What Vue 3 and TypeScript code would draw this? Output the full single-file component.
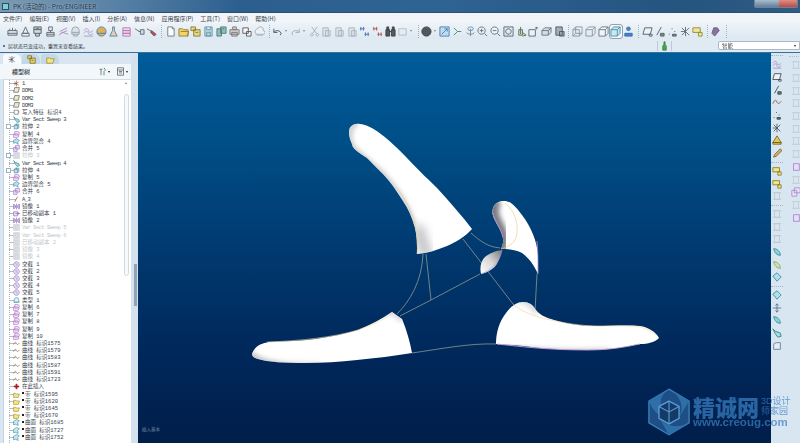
<script setup lang="ts">
/**
 * Pro/ENGINEER main window - model tree, toolbars and the shaded part
 */

interface Glyph {
  d: string
  stroke: string
  fill?: string
}

const glyphs: Record<string, Glyph> = {
  ruler: { d: 'M1 5h10v5H1zM3 5V3M6 5V2M9 5V3M1 8h10', stroke: '#49525c', fill: '#dfe6ec' },
  cone: { d: 'M6 1 9 8H3zM2 8h8v3H2z', stroke: '#49525c', fill: '#eef2f5' },
  sheet: { d: 'M2 1h8v7H2zM2 4h8M4 8v3h4V8M4 2.500h4', stroke: '#39424c', fill: '#cfd9e2' },
  person: { d: 'M4 1h4v4H4zM6 5v2M2 7h8v2H2zM2 9v2h8V9', stroke: '#49525c', fill: '#e4eaef' },
  wave: { d: 'M1 10 5 7 11 9M2 6l8-4M3 8l7-3', stroke: '#a27ab8', fill: 'none' },
  dome: { d: 'M2 9V5a4 4 0 0 1 8 0v4zM2 7h8M4 9v2h4V9', stroke: '#8a97a3', fill: '#d8e1e8' },
  ripple: { d: 'M1 5c2-3 4-3 5 0s3 2 5 0M1 8c2-3 4-3 5 0s3 2 5 0M1 11h10', stroke: '#a98dc2', fill: 'none' },
  globe: { d: 'M6 1a5 5 0 1 1-.1 0M1 8h10', stroke: '#2c6fb0', fill: '#e0a43a' },
  flask: { d: 'M5 1h2v4l3 6H2l3-6z', stroke: '#3f6d9b', fill: '#e7c9a8' },
  stack: { d: 'M2 2h8v3H2zM2 5h8v3H2zM2 8h8v3H2z', stroke: '#b060a8', fill: '#efd7ee' },
  tag: { d: 'M1 3l5 3M5 6h2M7 4h4v5H7z', stroke: '#556', fill: '#c7d6e0' },
  tagred: { d: 'M1 3l5 3M6 5l5 4-2 2-4-4z', stroke: '#6b3b3b', fill: '#a33' },
  page: { d: 'M3 1h5l2 2v8H3zM8 1v2h2', stroke: '#5c6670', fill: '#fff' },
  open: { d: 'M1 3h4l1 1h5v7H1zM3 6h9l-2 5', stroke: '#8f6f10', fill: '#f1cf55' },
  folders: { d: 'M1 1h5v4H1zM4 4h7v7H4zM6 7h3', stroke: '#7a6a1e', fill: '#e9d06a' },
  disk: { d: 'M2 1h8v10H2zM4 1v3h4V1M4 7h4v4H4z', stroke: '#5e8899', fill: '#a7d2df' },
  multi: { d: 'M1 3h5v8H1zM5 1h6v7H5zM7 3h2', stroke: '#3a6a6a', fill: '#7fb7ae' },
  printer: { d: 'M4 1h4v3H4zM1 4h10v5H1zM3 7h6v4H3z', stroke: '#666', fill: '#cfc9bd' },
  copy: { d: 'M2 2h6v6H2zM6 6h5v5H6z', stroke: '#444', fill: '#f5f5f5' },
  cloud: { d: 'M2 8a3 3 0 0 1 2-5 3 3 0 0 1 6 2 2 2 0 0 1 0 4H2zM3 10h7', stroke: '#9aa4ad', fill: '#eef2f5' },
  undo: { d: 'M2 3v4h4M2 7a4.500 4.500 0 0 1 8 1l-1 2', stroke: '#2f3a45', fill: 'none' },
  redo: { d: 'M10 3v4H6M10 7a4.500 4.500 0 0 0-8 1l1 2', stroke: '#94a0ab', fill: 'none' },
  cut: { d: 'M3 1l5 7M9 1 4 8M3 8a1.500 1.500 0 1 0 .1 0M9 8a1.500 1.500 0 1 0 .1 0', stroke: '#98a3ad', fill: 'none' },
  paste: { d: 'M2 2h6v9H2zM5 5h5v6H5z', stroke: '#a0aab3', fill: '#dbe2e8' },
  regen: { d: 'M2 1v4M5 1v4M1 3h5M7 7v4M10 7v4M6 9h5', stroke: '#2a5ea8', fill: 'none' },
  regen2: { d: 'M2 1v4M5 1v4M1 3h5M7 7v4M10 7v4M6 9h5', stroke: '#a83a3a', fill: 'none' },
  bino: { d: 'M1 4h4v7H1zM7 4h4v7H7zM5 6h2M2 1h2v3H2zM8 1h2v3H8z', stroke: '#222', fill: '#39414a' },
  dashed: { d: 'M2 3h8v7H2z', stroke: '#aab5bf', fill: 'none' },
  sphere: { d: 'M6 1a5 5 0 1 1-.1 0z', stroke: '#222', fill: '#3a3d42' },
  refit: { d: 'M1 1h10v10H1zM3 9l6-6M6 3h3v3', stroke: '#2f6ea8', fill: '#bcd8ee' },
  nodes: { d: 'M2 2l4 4-4 4M6 6h4', stroke: '#1f7a6a', fill: 'none' },
  spin: { d: 'M3 3a3 2 0 1 1 6 0 3 2 0 1 1-6 0M2 7a4 2 0 1 0 8 0M6 3v8', stroke: '#5b7f99', fill: 'none' },
  zoomin: { d: 'M5 1a4 4 0 1 1-.1 0M8 8l3 3M3 5h4M5 3v4', stroke: '#4b5a68', fill: '#eef3f7' },
  zoomout: { d: 'M5 1a4 4 0 1 1-.1 0M8 8l3 3M3 5h4', stroke: '#4b5a68', fill: '#eef3f7' },
  fit: { d: 'M1 1h10v10H1zM6 3a3 3 0 1 1-.1 0', stroke: '#3f5266', fill: '#dfe8ef' },
  orient: { d: 'M5 1v8M3 4h4v6H3zM7 7l4 3-4 1', stroke: '#3d5a45', fill: '#d7e5b9' },
  views: { d: 'M1 4h7v7H1zM8 2h3M9 1v3', stroke: '#47525c', fill: '#eef2f5' },
  layers: { d: 'M1 5l3-3h7L8 5zM1 5v5h7V5M8 5l3-3v5l-3 3', stroke: '#54616d', fill: '#cfdbe4' },
  display: { d: 'M2 1h7v9H2zM6 6h5v5H6z', stroke: '#3b3f44', fill: '#99a2aa' },
  box1: { d: 'M1 4h7v7H1zM1 4l3-3h7v7l-3 3M4 1v7h7M4 8l-3 3', stroke: '#7a8894', fill: 'none' },
  box2: { d: 'M1 4h7v7H1zM1 4l3-3h7v7l-3 3M8 4l3-3', stroke: '#7a8894', fill: 'none' },
  box3: { d: 'M1 4h7v7H1zM1 4l3-3h7v7l-3 3M8 4l3-3', stroke: '#59646e', fill: '#f4f7f9' },
  boxsel: { d: 'M1 4h7v7H1zM1 4l3-3h7v7l-3 3M8 4l3-3', stroke: '#2f7f96', fill: '#bfe6f0' },
  save: { d: 'M6 1a2 2 0 1 1-.1 0M2 8h8v3H2z', stroke: '#1a4fa0', fill: '#2a74d0' },
  plane: { d: 'M3 2h8L9 9H1zM8 9h3v2H8z', stroke: '#3b4650', fill: '#eef2f5' },
  axis: { d: 'M8 1 3 10M7 8h4v3H7z', stroke: '#3b4650', fill: '#5c8a5c' },
  points: { d: 'M2 9h1M5 3h1M8 6h1M6 9h4v2H6z', stroke: '#33424f', fill: '#5c8a5c' },
  csys: { d: 'M2 2l8 8M10 2l-8 8M6 1v10M1 6h5', stroke: '#4a5560', fill: 'none' },
  note: { d: 'M1 2h8v5H1zM7 7h4v4H7z', stroke: '#8a7a1a', fill: '#f0e58a' },
  hat: { d: 'M3 2h4l2 3-5 6-3-3z', stroke: '#5c4a66', fill: '#7a5a9a' },
  pencil: { d: 'M10 1 3 8l-1 3 3-1 7-7z', stroke: '#7a5a1f', fill: '#d9b36a' },
  warn: { d: 'M6 1 11 9H1zM1 9h10v2H1z', stroke: '#786010', fill: '#dcc95a' },
  bottle: { d: 'M5 1h2v3l2 2v5H3V6l2-2z', stroke: '#2d7a37', fill: '#45a950' },
  soft: { d: 'M3 2h6v8H3zM1 2h10M1 10h10', stroke: '#bcc6cf', fill: '#dde5ec' },
  purple: { d: 'M3 2h7v8H3z', stroke: '#9a5cc8', fill: '#e9dcf5' },
  blade: { d: 'M2 2c4 0 8 3 8 8-4 0-7-3-8-8z', stroke: '#2f8a9a', fill: '#8fd0da' },
  blade2: { d: 'M2 2c4 0 8 3 8 8-4 0-7-3-8-8z', stroke: '#8aa45f', fill: '#d0dfa9' },
  tube: { d: 'M1 5l5-4 5 5-5 5z', stroke: '#2f8a9a', fill: '#b6dee8' },
  move: { d: 'M6 1v10M1 6h10M4 3l2-2 2 2M4 9l2 2 2-2', stroke: '#4e7088', fill: 'none' },
  round: { d: 'M2 10V5a3 3 0 0 1 3-3h5v8z', stroke: '#5f7a8a', fill: '#e3edf3' },
  star: { d: 'M2 3l8 6M10 3 2 9M6 1v10M1 6h4', stroke: '#8c4a20', fill: 'none' },
  datum: { d: 'M3 1h8L9 9H1z', stroke: '#3b4650', fill: '#f3e9c6' },
  square: { d: 'M2 2h7v7H2zM9 5h2', stroke: '#4a5560', fill: '#fff' },
  sweep: { d: 'M1 1l3 3 6 2 1 4-4 1-3-4z', stroke: '#2f7f8a', fill: '#a9dbe0' },
  block: { d: 'M2 4h6v6H2zM2 4l2-2h6v6l-2 2M6 1v3', stroke: '#3f7f96', fill: '#bfe0ea' },
  dup: { d: 'M3 1h5a3 3 0 0 1 0 6H3zM1 5h6a3 3 0 0 1 0 6H1z', stroke: '#a964c4', fill: '#f3e6f7' },
  blend: { d: 'M1 4l5-3 5 3-3 3 1 4-4-3-4 1z', stroke: '#2f8aa0', fill: '#b9e2ec' },
  merge: { d: 'M1 4h6v7H1zM4 1h7v6H4z', stroke: '#9a68c4', fill: '#eee2f7' },
  gray: { d: 'M1 1h10v10H1zM4 3h4v6H4z', stroke: '#c7cdd2', fill: '#dfe2e5' },
  line: { d: 'M8 1 3 10', stroke: '#5a3a20', fill: 'none' },
  mirror: { d: 'M6 1v10M1 2l3 2v4l-3 2zM11 2 8 4v4l3 2z', stroke: '#7a58ae', fill: '#d7c8ee' },
  moved: { d: 'M1 3h7v7H1zM4 6h7M9 4l2 2-2 2', stroke: '#8a4ab8', fill: '#f1e6f8' },
  intersect: { d: 'M6 1a5 5 0 1 1-.1 0M4 4c2 0 3 2 3 4', stroke: '#9a80c6', fill: '#e2d8f2' },
  shape: { d: 'M2 9V5a4 4 0 0 1 8 0v4zM1 9h10', stroke: '#3d8fa0', fill: '#dff0f5' },
  curve: { d: 'M1 8c2-5 4-5 5-2s3 2 5-1', stroke: '#8a5a32', fill: 'none' },
  plus: { d: 'M5 2h2v3h3v2H7v3H5V7H2V5h3z', stroke: '#a01020', fill: '#c8102e' },
  quilt: { d: 'M1 4h4l1 1h5l-2 6H1z', stroke: '#a08a20', fill: '#f2e58a' },
  surface: { d: 'M1 4l5-3 5 2-3 3 1 5-5-2-3 1z', stroke: '#2f8aa0', fill: '#c9e9ef' },
}

const toolGroups: { name: string; drop?: boolean; on?: boolean }[][] = [
  ['ruler', 'cone', 'sheet', 'person', 'wave', 'dome', 'ripple', 'globe', 'flask', 'stack', 'tag', 'tagred'].map((name) => ({ name })),
  ['page', 'open', 'folders', 'disk', 'multi', 'printer', 'copy', 'cloud'].map((name) => ({ name })),
  [
    { name: 'undo', drop: true },
    { name: 'redo', drop: true },
    { name: 'cut' },
    { name: 'paste' },
    { name: 'paste' },
    { name: 'paste' },
    { name: 'regen' },
    { name: 'regen2' },
    { name: 'bino' },
    { name: 'dashed', drop: true },
  ],
  [
    { name: 'sphere', drop: true },
    { name: 'refit' },
    { name: 'nodes' },
    { name: 'spin' },
    { name: 'zoomin' },
    { name: 'zoomout' },
    { name: 'fit' },
    { name: 'orient' },
    { name: 'views' },
    { name: 'layers' },
    { name: 'display' },
  ],
  [{ name: 'box1' }, { name: 'box2' }, { name: 'box3' }, { name: 'boxsel', on: true }, { name: 'save' }],
  ['plane', 'axis', 'points', 'csys', 'note'].map((name) => ({ name })),
  [{ name: 'hat' }],
]

const menus = ['文件(F)', '编辑(E)', '视图(V)', '插入(I)', '分析(A)', '信息(N)', '应用程序(P)', '工具(T)', '窗口(W)', '帮助(H)']

interface Row {
  icon: string
  text: string
  off?: boolean
  plus?: boolean
  mark?: boolean
}

const seq = (icon: string, label: string, ids: (number | string)[]): Row[] =>
  ids.map((id) => ({ icon, text: `${label}${id}` }))

const rows: Row[] = [
  { icon: 'star', text: '1' },
  { icon: 'datum', text: 'DOM1' },
  { icon: 'datum', text: 'DOM2' },
  { icon: 'datum', text: 'DOM3' },
  { icon: 'square', text: '写入特征 标识4' },
  { icon: 'sweep', text: 'Var Sect Sweep 3' },
  { icon: 'block', text: '拉伸 2', plus: true },
  { icon: 'dup', text: '复制 4' },
  { icon: 'blend', text: '边界混合 4' },
  { icon: 'merge', text: '合并 5' },
  { icon: 'gray', text: '拉伸 3', off: true, plus: true },
  { icon: 'sweep', text: 'Var Sect Sweep 4' },
  { icon: 'block', text: '拉伸 4', plus: true },
  { icon: 'dup', text: '复制 5' },
  { icon: 'blend', text: '边界混合 5' },
  { icon: 'merge', text: '合并 6' },
  { icon: 'line', text: 'A_3' },
  { icon: 'mirror', text: '镜像 1' },
  { icon: 'moved', text: '已移动副本 1' },
  { icon: 'mirror', text: '镜像 2' },
  { icon: 'gray', text: 'Var Sect Sweep 5', off: true },
  { icon: 'gray', text: 'Var Sect Sweep 6', off: true },
  { icon: 'gray', text: '已移动副本 2', off: true },
  { icon: 'gray', text: '镜像 3', off: true },
  { icon: 'gray', text: '镜像 4', off: true },
  ...seq('intersect', '交截 ', [1, 2, 3, 4, 5]),
  { icon: 'shape', text: '类型 1' },
  ...seq('dup', '复制 ', [6, 7, 8, 9, 10]),
  ...seq('curve', '曲线 标识', [1575, 1579, 1583, 1587, 1591, 1723]),
  { icon: 'plus', text: '在此插入' },
  ...[1595, 1620, 1645, 1670].map((id) => ({ icon: 'quilt', text: `带 标识${id}`, mark: true })),
  ...[1685, 1727, 1752].map((id) => ({ icon: 'surface', text: `曲面 标识${id}`, mark: true })),
]

const isLatin = (text: string) => /^[A-Za-z]/.test(text)

const rightCol1 = [
  ['ripple', 'plane', 'axis', 'curve', 'points', 'csys', 'warn', 'pencil'],
  ['note', 'note', 'soft'],
  ['soft', 'soft', 'soft', 'blade', 'blade2', 'tube'],
  ['tube', 'move', 'blade', 'sweep', 'round'],
]
const rightCol2 = ['soft', 'soft', 'soft', 'soft', 'soft', 'soft', 'soft', 'soft', 'purple', 'soft', 'merge', 'soft', 'purple']

// Outlines in page pixels, used both as fill and as clip for the soft shading
const hornBig =
  'M349 131C349 125 354 122 360 123 372 124 388 137 407 157 420 171 430 180 437 187 450 201 462 215 472 228 465 236 456 241 447 245 437 249 428 252 417 253 417 243 417 235 415 227 412 216 408 207 403 200 396 189 390 180 383 173 377 167 372 162 367 157 360 152 352 148 352 143 350 139 349 135 349 131Z'
const hornSmall =
  'M503 200C510 199 516 206 522 214 531 226 537 240 538 254L538 273C534 264 529 257 522 252 516 249 509 248 501 248 505 240 503 233 498 225 494 218 491 213 493 207 495 202 499 200 503 200Z'
const footLeft =
  'M252 353C254 346 261 342 269 341 285 340 300 340 315 338 330 336 345 333 358 329 370 324 382 318 392 311L402 318C407 330 410 341 412 352 395 355 375 357 357 359 340 361 322 362 305 362 285 362 268 361 258 358 254 357 252 355 252 353Z'
const footRight =
  'M496 343C496 332 499 321 506 312 511 305 517 301 523 301 529 301 533 304 535 308 539 313 544 316 551 318 563 322 578 325 595 325 610 325 627 324 640 325 648 326 656 331 659 337 655 341 648 343 640 343 625 346 608 349 587 349 570 349 555 348 540 347 525 345 510 344 496 343Z'
</script>

<template>
  <div class="app">
    <!-- Window title -->
    <header class="title">
      <span class="title__icon"></span>
      <span class="title__text">PK (活动的) - Pro/ENGINEER</span>
      <div class="winbtns">
        <span class="winbtn"></span>
        <span class="winbtn"></span>
        <span class="winbtn winbtn--close"></span>
      </div>
    </header>

    <nav class="menu">
      <span v-for="m in menus" :key="m">{{ m }}</span>
    </nav>

    <div class="tools">
      <div v-for="(group, gi) in toolGroups" :key="gi" class="tools__group">
        <span v-for="(t, ti) in group" :key="ti" class="tool" :class="{ 'tool--on': t.on, 'tool--drop': t.drop }">
          <svg width="11" height="11" viewBox="0 0 12 12">
            <path :d="glyphs[t.name].d" :stroke="glyphs[t.name].stroke" :fill="glyphs[t.name].fill ?? 'none'" />
          </svg>
          <i v-if="t.drop" class="caret"></i>
        </span>
      </div>
    </div>

    <div class="msg">
      <span class="msg__dot"></span>
      <span class="msg__text">层状态已变成功，重置来查看结果。</span>
      <span class="msg__status">
        <svg width="7" height="10" viewBox="0 0 12 12" preserveAspectRatio="none">
          <path :d="glyphs.bottle.d" :stroke="glyphs.bottle.stroke" :fill="glyphs.bottle.fill" />
        </svg>
      </span>
      <span class="msg__select">智能<i class="caret caret--dark"></i></span>
    </div>

    <main class="main">
      <!-- Model tree -->
      <aside class="side">
        <div class="side__inner">
          <div class="tabs">
            <span class="tab tab--on"><svg width="8" height="9" viewBox="0 0 12 12"><path :d="glyphs.csys.d" stroke="#445" fill="none" /></svg></span>
            <span class="tab"><svg width="9" height="9" viewBox="0 0 12 12"><path :d="glyphs.folders.d" :stroke="glyphs.folders.stroke" :fill="glyphs.folders.fill" /></svg></span>
            <span class="tab"><svg width="9" height="9" viewBox="0 0 12 12"><path :d="glyphs.quilt.d" :stroke="glyphs.quilt.stroke" :fill="glyphs.quilt.fill" /></svg></span>
          </div>
          <div class="side__head">
            <span>模型树</span>
            <span class="side__acts">
              <svg width="9" height="9" viewBox="0 0 12 12"><path d="M2 3h4M4 3v8M8 1l2 3-2 2M8 6v5" stroke="#3f6a55" fill="none" /></svg>
              <i class="caret caret--dark"></i>
              <svg class="side__list" width="9" height="9" viewBox="0 0 12 12"><path d="M2 1h8v10H2zM2 4h8M4 6h4M4 8h4" stroke="#555f69" fill="#eef2f5" /></svg>
              <i class="caret caret--dark"></i>
            </span>
          </div>
          <div class="tree">
            <div class="tree__rows">
              <div v-for="(r, i) in rows" :key="i" class="row" :class="{ 'row--off': r.off }">
                <span class="row__plus" :class="{ 'row__plus--on': r.plus }"></span>
                <svg class="row__icon" width="7" height="7" viewBox="0 0 12 12">
                  <path :d="glyphs[r.icon].d" :stroke="glyphs[r.icon].stroke" :fill="glyphs[r.icon].fill ?? 'none'" />
                </svg>
                <span class="row__text" :class="{ 'row__text--latin': isLatin(r.text) }"><b v-if="r.mark" class="row__mark"></b>{{ r.text }}</span>
              </div>
            </div>
            <div class="tree__scroll">
              <span class="tree__arrow"></span>
              <span class="tree__thumb"></span>
            </div>
          </div>
        </div>
        <div class="splitter"><span class="splitter__bar"></span></div>
      </aside>

      <!-- Graphics window -->
      <section class="canvas">
        <svg class="part" viewBox="138 52 633 391" width="633" height="391">
          <defs>
            <filter id="soft" x="-30%" y="-30%" width="160%" height="160%">
              <feGaussianBlur stdDeviation="2.4" />
            </filter>
            <filter id="wide" x="-50%" y="-50%" width="200%" height="200%">
              <feGaussianBlur stdDeviation="5" />
            </filter>
            <clipPath id="clipBig"><path :d="hornBig" /></clipPath>
            <clipPath id="clipSmall"><path :d="hornSmall" /></clipPath>
            <clipPath id="clipFootL"><path :d="footLeft" /></clipPath>
            <clipPath id="clipFootR"><path :d="footRight" /></clipPath>
            <linearGradient id="lens" x1="0" y1="1" x2="1" y2="0">
              <stop offset="0" stop-color="#fff" />
              <stop offset="0.5" stop-color="#d8d8d8" />
              <stop offset="1" stop-color="#77777c" />
            </linearGradient>
          </defs>

          <!-- Connecting curves -->
          <g fill="none" stroke="#8d9a8e" stroke-width="0.8">
            <path d="M471 232C480 240 488 246 500 247" />
            <path d="M463 238 513 303" />
            <path d="M423 253C422 280 410 300 397 313" />
            <path d="M426 253 431 299" />
            <path d="M480 273 431 299 400 315" />
            <path d="M537 273 535 310" />
            <path d="M412 352C440 348 470 342 496 343" />
          </g>

          <!-- Upper horn -->
          <path fill="#fff" :d="hornBig" />
          <g clip-path="url(#clipBig)">
            <path filter="url(#soft)" fill="none" stroke="#b9b9bd" stroke-width="4" d="M358 121C349 124 348 138 352 145 360 154 375 165 383 173 396 187 408 205 414 224" />
            <path filter="url(#wide)" fill="none" stroke="#c4c4c8" stroke-width="12" d="M418 225C420 236 423 246 428 256" />
          </g>
          <path fill="none" stroke="#e7c98c" stroke-width="0.6" d="M417 253C420 232 412 205 397 187" />

          <!-- Right horn and the small lens below it -->
          <path fill="#fff" :d="hornSmall" />
          <g clip-path="url(#clipSmall)">
            <path filter="url(#soft)" fill="none" stroke="#7c7c82" stroke-width="11" d="M497 199C491 206 493 215 498 224 503 233 505 240 500 250" />
            <path filter="url(#soft)" fill="none" stroke="#cfc8dc" stroke-width="3" d="M538 244V274" />
          </g>
          <path fill="none" stroke="#e9c67a" stroke-width="0.6" d="M505 202C515 210 518 222 517 232 516 241 510 246 501 248" />
          <path fill="none" stroke="#b493d6" stroke-width="0.8" d="M537 240C538 250 538 262 538 273M493 212C495 220 501 228 503 236" />
          <path fill="url(#lens)" d="M502 249C494 250 488 253 484 257 480 262 480 268 481 273 489 271 495 267 498 261 500 257 501 253 502 249Z" />
          <path fill="none" stroke="#a98ccc" stroke-width="0.6" d="M502 249C501 257 495 268 481 273" />

          <!-- Left foot -->
          <path fill="#fff" :d="footLeft" />
          <g clip-path="url(#clipFootL)">
            <path filter="url(#soft)" fill="none" stroke="#b2b2b7" stroke-width="5" d="M250 352C258 362 280 366 320 365" />
            <path filter="url(#soft)" fill="none" stroke="#d6d6d9" stroke-width="5" d="M385 311C392 310 398 314 402 320" />
          </g>
          <path fill="none" stroke="#ecd29a" stroke-width="0.6" d="M267 341C300 340 335 336 358 329 372 324 385 318 393 312" />

          <!-- Right foot -->
          <path fill="#fff" :d="footRight" />
          <g clip-path="url(#clipFootR)">
            <path filter="url(#soft)" fill="none" stroke="#bdbdc2" stroke-width="6" d="M496 345C530 352 570 352 610 351" />
            <path filter="url(#soft)" fill="none" stroke="#d4d4d8" stroke-width="5" d="M513 300C520 296 532 302 537 312" />
          </g>
          <path fill="none" stroke="#ecd29a" stroke-width="0.6" d="M513 303C520 310 535 316 551 319 565 322 580 325 600 325 615 325 630 324 640 326 648 328 652 331 656 334" />
          <path fill="none" stroke="#c9a1e0" stroke-width="0.9" d="M497 343C525 346 550 349 587 349 610 349 625 346 640 343" />
        </svg>
        <span class="canvas__note">插入基本</span>
      </section>

      <!-- Feature toolbar -->
      <aside class="rail">
        <div class="rail__col">
          <template v-for="(group, gi) in rightCol1" :key="gi">
            <span class="rail__sep"></span>
            <svg v-for="(name, ni) in group" :key="ni" class="rail__icon" width="10" height="10" viewBox="0 0 12 12">
              <path :d="glyphs[name].d" :stroke="glyphs[name].stroke" :fill="glyphs[name].fill ?? 'none'" />
            </svg>
          </template>
        </div>
        <div class="rail__col rail__col--second">
          <span class="rail__sep"></span>
          <svg v-for="(name, ni) in rightCol2" :key="ni" class="rail__icon" width="10" height="10" viewBox="0 0 12 12">
            <path :d="glyphs[name].d" :stroke="glyphs[name].stroke" :fill="glyphs[name].fill ?? 'none'" />
          </svg>
        </div>
      </aside>
    </main>

    <!-- Forum watermark -->
    <div class="mark">
      <svg width="42" height="48" viewBox="0 0 46 52">
        <path d="M23 1 45 14V38L23 51 1 38V14Z" fill="#1d4f86" stroke="#3d7fb8" stroke-width="1.500" />
        <path d="M23 1C36 8 40 20 34 32L45 14ZM45 38C32 44 19 42 12 32L23 51ZM1 14C6 26 12 32 23 30 12 22 10 10 23 1Z" fill="#2f6fa8" />
        <path d="M23 14 34 20V33L23 39 12 33V20Z" fill="#143a68" stroke="#5b9ad0" stroke-width="1.500" />
        <path d="M23 14V26M12 20 23 26 34 20M23 26V39" fill="none" stroke="#5b9ad0" stroke-width="1.200" />
      </svg>
      <div class="mark__text">
        <div class="mark__top">
          <span class="mark__name">精诚网</span>
          <span class="mark__sub">3D设计<br />师家园</span>
        </div>
        <span class="mark__url">www.creoug.com</span>
      </div>
    </div>
  </div>
</template>

<style>
html,
body {
  margin: 0;
  background: #d9e6f1;
}
</style>

<style scoped>
.app {
  position: relative;
  display: flex;
  flex-direction: column;
  width: 800px;
  height: 443px;
  overflow: hidden;
  font-family: "Noto Sans CJK SC", "Liberation Sans", sans-serif;
  font-size: 6px;
  color: #38424c;
  filter: blur(0.35px);
}

.title {
  display: flex;
  align-items: center;
  gap: 4px;
  height: 13px;
  padding-left: 2px;
  background: linear-gradient(90deg, #7b9ab3 0, #5f86a8 12%, #2c5f8f 30%, #2f6393 55%, #25547f 85%, #2f5c84 100%);
  border-bottom: 1px solid #2d4f6e;
  box-sizing: border-box;
}

.title__icon {
  width: 5px;
  height: 5px;
  background: #7fd0d6;
  border: 1px solid #2a4f60;
}

.title__text {
  font-size: 6.5px;
  color: #1f3040;
  text-shadow: 0 0 2px #b9cddd;
}

.winbtns {
  display: flex;
  align-self: flex-start;
  margin-left: auto;
  margin-right: 2px;
  height: 7px;
  border: 1px solid #6c8397;
  border-top: 0;
  border-radius: 0 0 2px 2px;
}

.winbtn {
  width: 12px;
  background: linear-gradient(#a9bccc, #62809b);
}

.winbtn--close {
  width: 18px;
  background: linear-gradient(#de8d85, #b84d45);
}

.menu {
  display: flex;
  align-items: center;
  gap: 7px;
  height: 10px;
  padding-left: 3px;
  background: #f1f5f9;
  white-space: nowrap;
}

.tools {
  display: flex;
  align-items: center;
  gap: 2px;
  height: 16px;
  padding-left: 6px;
  background: linear-gradient(#edf3f8, #dde8f1);
}

.tools__group {
  display: flex;
  align-items: center;
  padding-right: 3px;
  border-right: 1px dotted #9fb2c2;
  height: 13px;
}

.tool {
  display: flex;
  align-items: center;
  justify-content: center;
  width: 12.7px;
  height: 13px;
}

.tool svg {
  opacity: 0.85;
}

.tool--drop {
  width: 18px;
  justify-content: flex-start;
  gap: 2px;
}

.tool--on {
  outline: 1px solid #8fa3b3;
  border-radius: 2px;
  background: #f3f7fa;
}

.caret {
  display: inline-block;
  width: 0;
  height: 0;
  border-left: 1.5px solid transparent;
  border-right: 1.5px solid transparent;
  border-top: 2px solid #7b8894;
}

.caret--dark {
  border-top-color: #222;
}

.msg {
  display: flex;
  align-items: center;
  height: 13px;
  padding-left: 3px;
  background: #dfeaf3;
  border-bottom: 1px solid #3c6f98;
}

.msg__dot {
  width: 2px;
  height: 2px;
  margin-right: 3px;
  border-radius: 50%;
  background: #1d4f9c;
}

.msg__text {
  font-size: 5px;
}

.msg__status {
  display: flex;
  justify-content: center;
  width: 13px;
  margin-left: auto;
  margin-right: 46px;
  border-left: 1px solid #bccbd8;
  border-right: 1px solid #bccbd8;
}

.msg__select {
  display: flex;
  align-items: center;
  justify-content: space-between;
  width: 82px;
  height: 9px;
  padding: 0 3px;
  box-sizing: border-box;
  background: #fff;
  border: 1px solid #a8b8c6;
  border-radius: 2px 0 0 2px;
  font-size: 5.5px;
}

.main {
  display: flex;
  flex: 1;
  min-height: 0;
}

.side {
  display: flex;
  width: 138px;
  background: #d9e6f1;
}

.side__inner {
  display: flex;
  flex-direction: column;
  width: 131px;
  min-width: 0;
}

.tabs {
  display: flex;
  gap: 1px;
  height: 11px;
  padding: 1px 0 0 3px;
  box-sizing: border-box;
}

.tab {
  display: flex;
  align-items: center;
  justify-content: center;
  width: 18px;
  height: 10px;
  border-radius: 3px 6px 0 0;
  background: #c4d8e8;
}

.tab--on {
  background: #f7fafc;
}

.side__head {
  display: flex;
  align-items: center;
  justify-content: space-between;
  height: 15px;
  padding: 0 3px 0 12px;
  background: #f3f7fa;
  font-weight: 500;
  color: #2d353c;
}

.side__acts {
  display: flex;
  align-items: center;
  gap: 1px;
}

.side__list {
  margin-left: 5px;
}

.tree {
  display: flex;
  flex: 1;
  min-height: 0;
  margin-left: 3px;
  background: #fff;
  border-left: 1px solid #c8d4de;
  border-top: 1px solid #d2dce5;
  box-sizing: border-box;
}

.tree__rows {
  flex: 1;
  min-width: 0;
  overflow: hidden;
  background: repeating-linear-gradient(#a9b3bb 0 1px, transparent 1px 2px) 5px 0 / 1px 100% no-repeat;
}

.row {
  display: flex;
  align-items: center;
  height: 7.22px;
  white-space: nowrap;
  font-family: "Liberation Mono", "Noto Sans CJK SC", monospace;
  font-size: 5.5px;
  line-height: 7px;
  background: linear-gradient(#b4bcc4, #b4bcc4) 5px 50% / 7px 1px no-repeat;
}

.row--off {
  color: #c3c8cc;
}

.row__plus {
  flex: none;
  width: 3px;
  height: 3px;
  margin: 0 1.5px 0 2px;
  border: 1px solid transparent;
}

.row__plus--on {
  border-color: #9db2c4;
  background: #fff;
}

.row__icon {
  flex: none;
  margin-right: 2.5px;
}

.row__text--latin {
  letter-spacing: -0.55px;
}

.row__mark {
  display: inline-block;
  width: 2px;
  height: 2px;
  margin-right: 1px;
  vertical-align: 1.5px;
  background: #222;
}

.tree__scroll {
  position: relative;
  flex: none;
  width: 8px;
}

.tree__arrow {
  position: absolute;
  top: 2px;
  left: 2px;
  width: 0;
  height: 0;
  border-left: 1.5px solid transparent;
  border-right: 1.5px solid transparent;
  border-bottom: 2px solid #7b8894;
}

.tree__thumb {
  position: absolute;
  top: 14px;
  bottom: 167px;
  left: 1px;
  width: 5px;
  border: 1px solid #d3dbe2;
  border-radius: 3px;
  background: #f7f9fb;
  box-sizing: border-box;
}

.splitter {
  position: relative;
  flex: 1;
  background: #d4e2ee;
}

.splitter__bar {
  position: absolute;
  top: 211px;
  right: 1px;
  width: 3px;
  height: 42px;
  background: #8fa4b7;
}

.canvas {
  position: relative;
  flex: 1;
  min-width: 0;
  background: linear-gradient(#005c9b 0, #004f88 22%, #003a70 50%, #00275a 78%, #011e4a 100%);
}

.part {
  display: block;
}

.canvas__note {
  position: absolute;
  left: 4px;
  bottom: 11px;
  font-size: 4.5px;
  color: #6d87a5;
}

.rail {
  display: flex;
  flex: none;
  width: 29px;
  box-sizing: border-box;
  background: #d8e6f2;
  overflow: hidden;
}

.rail__col {
  display: flex;
  flex-direction: column;
  flex: none;
  align-items: center;
  width: 12px;
}

.rail__col--second {
  width: 14px;
  margin-left: 6px;
  margin-top: 1px;
  opacity: 0.75;
}

.rail__sep {
  flex: none;
  width: 100%;
  height: 0;
  margin: 2px 0;
  border-top: 1px dotted #a7b6c3;
}

.rail__icon {
  flex: none;
  margin: 1.35px 0;
}

.mark {
  position: absolute;
  left: 648px;
  top: 388px;
  display: flex;
  align-items: flex-start;
  gap: 3px;
}

.mark__text {
  display: flex;
  flex-direction: column;
  color: rgba(58, 128, 196, 0.72);
  margin-top: 7px;
}

.mark__top {
  display: flex;
  align-items: center;
}

.mark__name {
  font-size: 22px;
  line-height: 22px;
  font-weight: 900;
}

.mark__sub {
  margin-left: 2px;
  font-size: 9px;
  line-height: 10px;
  font-family: "Liberation Sans", "Noto Sans CJK SC", sans-serif;
}

.mark__url {
  font-family: "Liberation Sans", sans-serif;
  font-size: 11.5px;
  line-height: 11px;
  font-weight: 700;
  white-space: nowrap;
}
</style>
